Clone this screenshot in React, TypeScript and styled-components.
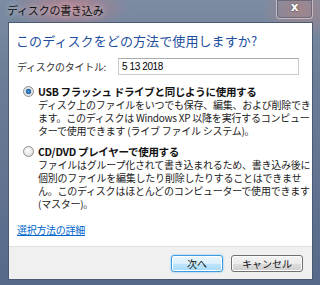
import styled, { createGlobalStyle } from "styled-components";

const GlobalStyle = createGlobalStyle`
	html, body {
		margin: 0;
		padding: 0;
		background: #5b6d85;
	}
	* {
		box-sizing: border-box;
	}
`;

const options = [
	{
		title: "USB フラッシュ ドライブと同じように使用する",
		lines: [
			"ディスク上のファイルをいつでも保存、編集、および削除でき",
			"ます。このディスクは Windows XP 以降を実行するコンピュー",
			"ターで使用できます (ライブ ファイル システム)。",
		],
		checked: true,
	},
	{
		title: "CD/DVD プレイヤーで使用する",
		lines: [
			"ファイルはグループ化されて書き込まれるため、書き込み後に",
			"個別のファイルを編集したり削除したりすることはできませ",
			"ん。このディスクはほとんどのコンピューターで使用できます",
			"(マスター)。",
		],
		checked: false,
	},
];

export const App = () => {
	return (
		<>
			<GlobalStyle />
			<Window>
				<TitleBar>
					<Title>ディスクの書き込み</Title>
					<Close>x</Close>
				</TitleBar>
				<Client>
					<Content>
						<Heading>このディスクをどの方法で使用しますか?</Heading>
						<TitleRow>
							<Label>ディスクのタイトル:</Label>
							<Input defaultValue="5 13 2018" />
						</TitleRow>
						{options.map((o) => (
							<Option key={o.title}>
								<OptionHead>
									<Radio $checked={o.checked} />
									<OptionTitle>{o.title}</OptionTitle>
								</OptionHead>
								<Desc>
									{o.lines.map((l) => (
										<Line key={l}>{l}</Line>
									))}
								</Desc>
							</Option>
						))}
						<Link href="#">選択方法の詳細</Link>
					</Content>
					<Footer>
						<Button $primary>次へ</Button>
						<Button>キャンセル</Button>
					</Footer>
				</Client>
			</Window>
		</>
	);
};

export default App;

const Window = styled.div`
	width: 320px;
	height: 285px;
	display: flex;
	flex-direction: column;
	font-family: "Noto Sans CJK JP", "Noto Sans", sans-serif;
	background:
		radial-gradient(ellipse 60px 22px at 70px 8px, rgba(200, 120, 130, 0.75), rgba(200, 120, 130, 0) 100%),
		radial-gradient(ellipse 40px 30px at 300px 10px, rgba(190, 130, 125, 0.6), rgba(190, 130, 125, 0) 100%),
		linear-gradient(180deg, #7b8ca3 0%, #6a7c95 30%, #56698a 100%);
`;

const TitleBar = styled.div`
	height: 22px;
	display: flex;
	align-items: flex-start;
	padding-left: 7px;
`;

const Title = styled.div`
	font-size: 11px;
	line-height: 20px;
	color: #111;
	text-shadow: 0 0 6px rgba(255, 255, 255, 0.8);
	letter-spacing: -0.2px;
`;

const Close = styled.div`
	margin-left: auto;
	margin-right: 7px;
	width: 37px;
	height: 19px;
	border: 1px solid rgba(255, 255, 255, 0.45);
	border-top: none;
	border-radius: 0 0 4px 4px;
	box-shadow: inset 0 0 0 1px rgba(40, 50, 70, 0.35);
	color: #fff;
	font-family: "DejaVu Sans", sans-serif;
	font-weight: bold;
	font-size: 12px;
	line-height: 15px;
	text-align: center;
	text-shadow: 0 0 2px #333;
`;

const Client = styled.div`
	flex: 1;
	margin: 0 7px 5px 8px;
	background: #fff;
	border: 1px solid #4a5a72;
	display: flex;
	flex-direction: column;
`;

const Content = styled.div`
	flex: 1;
	padding: 9px 8px 0 7px;
	display: flex;
	flex-direction: column;
	align-items: flex-start;
`;

const Heading = styled.div`
	font-size: 13px;
	line-height: 18px;
	color: #1e4e9e;
	white-space: nowrap;
	letter-spacing: 0.1px;
`;

const TitleRow = styled.div`
	display: flex;
	align-items: center;
	margin-top: 8px;
	width: 100%;
`;

const Label = styled.div`
	font-size: 10px;
	color: #333;
	width: 102px;
	padding-left: 1px;
	letter-spacing: -0.3px;
`;

const Input = styled.input`
	width: 181px;
	height: 17px;
	border: 1px solid #c8cbd0;
	border-top-color: #a8abb2;
	padding: 0 3px;
	font-family: "Liberation Sans", sans-serif;
	font-size: 10px;
	letter-spacing: -0.4px;
	color: #000;
	outline: none;
`;

const Option = styled.div`
	margin-top: 9px;
	display: flex;
	flex-direction: column;
	& + & {
		margin-top: 7px;
	}
`;

const OptionHead = styled.div`
	display: flex;
	align-items: center;
	height: 14px;
`;

const Radio = styled.span<{ $checked?: boolean }>`
	width: 11px;
	height: 11px;
	border-radius: 50%;
	margin: 0 4px 0 7px;
	border: 1px solid #8f8f8f;
	background: ${(p) =>
		p.$checked
			? "radial-gradient(circle, #4aa0e0 0, #1f5f9f 2.4px, #d8dde3 3px, #f2f2f2 100%)"
			: "radial-gradient(circle at 40% 35%, #fcfcfc 0, #e6e6e6 60%, #cfcfcf 100%)"};
`;

const OptionTitle = styled.div`
	font-size: 10.5px;
	font-weight: bold;
	color: #111;
	white-space: nowrap;
	letter-spacing: -0.3px;
`;

const Desc = styled.div`
	padding-left: 22px;
`;

const Line = styled.div`
	font-size: 10px;
	line-height: 13px;
	color: #222;
	white-space: nowrap;
	letter-spacing: -0.24px;
`;

const Link = styled.a`
	margin-top: 12px;
	margin-left: 1px;
	font-size: 10px;
	color: #0066cc;
	text-decoration: underline;
	letter-spacing: -0.3px;
`;

const Footer = styled.div`
	height: 33px;
	background: #f0f0f0;
	border-top: 1px solid #dfdfdf;
	display: flex;
	justify-content: flex-end;
	align-items: flex-start;
	gap: 8px;
	padding: 8px 9px 0 0;
`;

const Button = styled.button<{ $primary?: boolean }>`
	width: ${(p) => (p.$primary ? "52px" : "72px")};
	height: 17px;
	padding: 0;
	border-radius: 3px;
	font-family: "Noto Sans CJK JP", sans-serif;
	font-size: 10px;
	color: #111;
	border: 1px solid ${(p) => (p.$primary ? "#3c9ae0" : "#707070")};
	background: ${(p) =>
		p.$primary
			? "linear-gradient(180deg, #eaf6fd 0%, #d9f0fc 50%, #bee6fd 51%, #a7d9f5 100%)"
			: "linear-gradient(180deg, #f2f2f2 0%, #ebebeb 50%, #dddddd 51%, #cfcfcf 100%)"};
	box-shadow: ${(p) =>
		p.$primary ? "0 0 2px #5bb7f0, inset 0 0 0 1px #fff" : "inset 0 0 0 1px #fcfcfc"};
	line-height: 15px;
`;
